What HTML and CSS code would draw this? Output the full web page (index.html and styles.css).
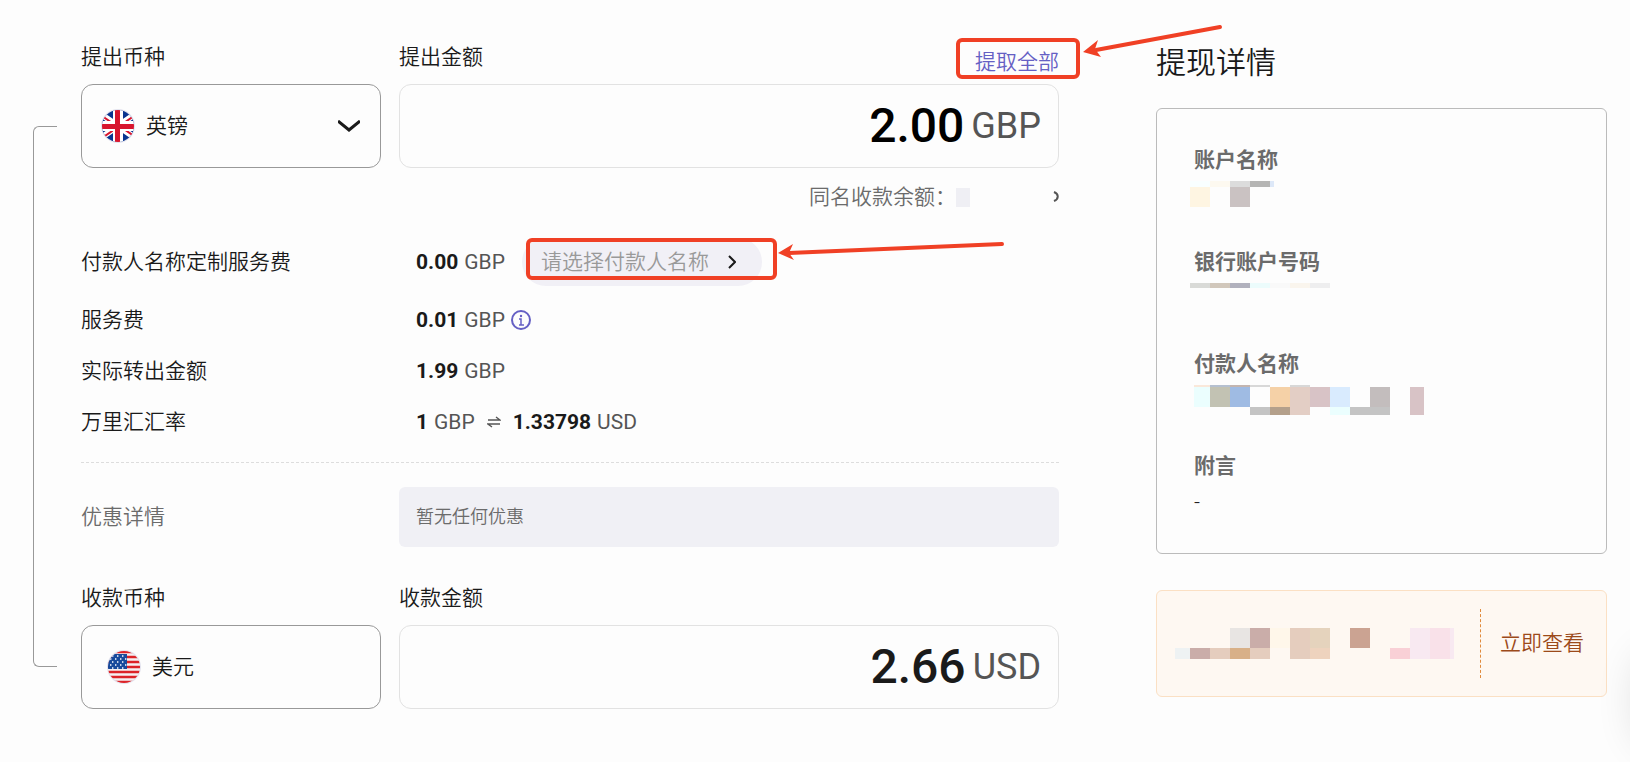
FILE: index.html
```html
<!DOCTYPE html>
<html lang="zh-CN">
<head>
  <meta charset="UTF-8" />
  <meta name="viewport" content="width=device-width, initial-scale=1.0"/>
  <title>提现</title>
  <link rel="stylesheet" href="styles.css">
</head>
<body>
  <main class="page">
    <form class="transfer">
      <div class="bracket"></div>

      <div class="fields">
        <div class="row">
          <div class="col">
            <div class="head"><label for="from-currency">提出币种</label></div>
            <div class="box currency">
              <svg class="flag" viewBox="0 0 34 34">
                <clipPath id="round"><circle cx="17" cy="17" r="16"/></clipPath>
                <circle cx="17" cy="17" r="17" fill="#e3e3ee"/>
                <g clip-path="url(#round)">
                  <path fill="#0a3590" d="M0 0h34v34H0z"/>
                  <path stroke="#fff" stroke-width="6" d="M-3 3l40 28M-3 31L37 3"/>
                  <path stroke="#d8152e" stroke-width="2" d="M-2 5l19 13M36 29L17 16M-2 31l19-13M36 5L17 18"/>
                  <path fill="#fff" d="M12 0h10v34H12zM0 12h34v10H0z"/>
                  <path fill="#d8152e" d="M14 0h5v34h-5zM0 15h34v5H0z"/>
                </g>
              </svg>
              <select id="from-currency">
                <option>英镑</option>
                <option>美元</option>
              </select>
              <svg class="arrow" viewBox="0 0 22 12"><path d="M0 1l11 9 11-9" fill="none" stroke="#1a1a1a" stroke-width="3"/></svg>
            </div>
          </div>
          <div class="col">
            <div class="head">
              <label for="from-amount">提出金额</label>
              <a class="all marked" href="#">提取全部
                <svg class="pointer pointer-all" viewBox="0 0 142 34">
                  <path d="M14 26L138 3" stroke="#f04025" stroke-width="4" stroke-linecap="round"/>
                  <path d="M1 28l15-12-3 9 6 8z" fill="#f04025"/>
                </svg>
              </a>
            </div>
            <div class="box amount">
              <input type="text" id="from-amount" class="strong" value="2.00">
              <span class="unit">GBP</span>
            </div>
          </div>
        </div>

        <div class="balance">
          <span>同名收款余额：</span>
          <span class="masked"></span>
          <svg viewBox="0 0 6 12"><path d="M1 1c5 2 5 7 0 9" fill="none" stroke="#555" stroke-width="2"/></svg>
        </div>

        <div class="line payer">
          <span>付款人名称定制服务费</span>
          <div class="value">
            <b>0.00</b> <i>GBP</i>
            <div class="marked">
              <button type="button" class="pill">请选择付款人名称
                <svg viewBox="0 0 8 14"><path d="M1 1l6 6-6 6" fill="none" stroke="#1a1a1a" stroke-width="2"/></svg>
              </button>
              <svg class="pointer pointer-payer" viewBox="0 0 230 20">
                <path d="M12 13L225 4" stroke="#f04025" stroke-width="4" stroke-linecap="round"/>
                <path d="M1 13l15-9-4 9 5 7z" fill="#f04025"/>
              </svg>
            </div>
          </div>
        </div>
        <div class="line">
          <span>服务费</span>
          <div class="value">
            <b>0.01</b> <i>GBP</i>
            <svg class="info" viewBox="0 0 20 20">
              <circle cx="10" cy="10" r="9" fill="none" stroke="#6560c4" stroke-width="2"/>
              <path d="M8 9h2v6M8 15h5" fill="none" stroke="#6560c4" stroke-width="1.5"/>
              <circle cx="10" cy="6" r="1.2" fill="#6560c4"/>
            </svg>
          </div>
        </div>
        <div class="line">
          <span>实际转出金额</span>
          <div class="value"><b>1.99</b> <i>GBP</i></div>
        </div>
        <div class="line">
          <span>万里汇汇率</span>
          <div class="value">
            <b>1</b> <i>GBP</i>
            <svg class="swap" viewBox="0 0 14 12"><path d="M1 4h12L9 1M13 8H1l4 3" fill="none" stroke="#555" stroke-width="1.4"/></svg>
            <b>1.33798</b> <i>USD</i>
          </div>
        </div>

        <div class="promo">
          <span>优惠详情</span>
          <div class="promo-box">暂无任何优惠</div>
        </div>

        <div class="row">
          <div class="col">
            <div class="head"><label for="to-currency">收款币种</label></div>
            <div class="box currency target">
              <svg class="flag" viewBox="0 0 34 34">
                <circle cx="17" cy="17" r="17" fill="#e3e3ee"/>
                <g clip-path="url(#round)">
                  <path fill="#f5f0f2" d="M0 0h34v34H0z"/>
                  <path stroke="#dc2328" stroke-width="2.6" d="M0 2h34M0 7h34M0 12h34M0 17h34M0 22h34M0 27h34M0 32h34"/>
                  <path fill="#174a9c" d="M0 4h20v15H0z"/>
                  <path stroke="#fff" stroke-width="1.4" stroke-dasharray="1.4 3.6" d="M5 6h15M3 9h17M5 12h15M3 15h17M5 18h15"/>
                </g>
              </svg>
              <select id="to-currency">
                <option>美元</option>
              </select>
            </div>
          </div>
          <div class="col">
            <div class="head"><label for="to-amount">收款金额</label></div>
            <div class="box amount">
              <input type="text" id="to-amount" value="2.66">
              <span class="unit">USD</span>
            </div>
          </div>
        </div>
      </div>
    </form>

    <aside class="detail">
      <h2>提现详情</h2>
      <dl class="card">
        <dt>账户名称</dt>
        <dd>
          <svg class="mosaic" width="84" height="26">
            <path fill="#f9ffff" d="M0 0h20v6H0z"/><path fill="#fdf9f0" d="M20 0h20v6H20z"/>
            <path fill="#dcdcdc" d="M40 0h20v6H40z"/><path fill="#b5b5b4" d="M60 0h20v6H60z"/>
            <path fill="#dde8f8" d="M80 0h4v6h-4z"/><path fill="#fef5e2" d="M0 6h20v20H0z"/>
            <path fill="#cac2c2" d="M40 6h20v20H40z"/>
          </svg>
        </dd>
        <dt>银行账户号码</dt>
        <dd>
          <svg class="mosaic" width="140" height="5">
            <path fill="#d9dad7" d="M0 0h20v5H0z"/><path fill="#d1c7bb" d="M20 0h20v5H20z"/>
            <path fill="#b1b1bd" d="M40 0h20v5H40z"/><path fill="#ecfcfc" d="M60 0h20v5H60z"/>
            <path fill="#f9f9f9" d="M80 0h20v5H80z"/><path fill="#faf5ed" d="M100 0h20v5h-20z"/>
            <path fill="#eeeeef" d="M120 0h20v5h-20z"/>
          </svg>
        </dd>
        <dt>付款人名称</dt>
        <dd>
          <svg class="mosaic" width="234" height="30">
            <path fill="#fae8da" d="M4 0h16v2H4z"/><path fill="#b5c0d0" d="M20 0h20v2H20z"/>
            <path fill="#c3b5b0" d="M40 0h20v2H40z"/><path fill="#d8d8d8" d="M60 0h20v2H60zM100 0h20v2h-20z"/>
            <path fill="#ebfefe" d="M4 2h16v20H4zM140 22h20v8h-20z"/><path fill="#c2c2b3" d="M20 2h20v20H20z"/>
            <path fill="#9fbbe3" d="M40 2h20v20H40z"/><path fill="#f5d1a7" d="M80 2h20v20H80z"/>
            <path fill="#e3cec5" d="M100 2h20v28h-20z"/><path fill="#d8c3c6" d="M120 2h20v20h-20zM220 2h14v28h-14z"/>
            <path fill="#d9ebfe" d="M140 2h20v20h-20z"/><path fill="#c3bdbd" d="M180 2h20v20h-20z"/>
            <path fill="#c4c4c4" d="M60 22h20v8H60zM160 22h40v8h-40z"/><path fill="#b4a08b" d="M80 22h20v8H80z"/>
          </svg>
        </dd>
        <dt>附言</dt>
        <dd>-</dd>
      </dl>

      <div class="notice">
        <svg class="mosaic" width="279" height="31">
          <path fill="#e8e5e3" d="M55 0h20v20H55z"/><path fill="#caada9" d="M75 0h20v20H75zM15 20h20v11H15z"/>
          <path fill="#fff7ea" d="M95 0h20v20H95z"/><path fill="#e5cdbe" d="M115 0h20v31h-20zM35 20h20v11H35zM75 20h20v11H75z"/>
          <path fill="#e5d3bd" d="M135 0h20v20h-20z"/><path fill="#eed3be" d="M135 20h20v11h-20z"/>
          <path fill="#cba392" d="M175 0h20v20h-20z"/><path fill="#eef2f3" d="M0 20h15v11H0z"/>
          <path fill="#d8b088" d="M55 20h20v11H55z"/><path fill="#f9d0d6" d="M215 20h20v11h-20z"/>
          <path fill="#f8e9f1" d="M235 0h44v31h-44z"/><path fill="#f9e1e9" d="M255 0h20v31h-20z"/>
        </svg>
        <a href="#">立即查看</a>
      </div>
    </aside>
  </main>
  <div class="edge-shadow"></div>
</body>
</html>
```

FILE: styles.css
```css
* {
  box-sizing: border-box;
}

body {
  margin: 0;
  background: #fdfdfd;
  color: #1a1a1a;
  font-family: Roboto, "Noto Sans CJK SC", sans-serif;
  font-size: 21px;
  font-weight: 350;
  line-height: 30px;
}

a {
  text-decoration: none;
}

.page {
  display: flex;
  align-items: flex-start;
  gap: 97px;
  padding: 42px 23px 42px 33px;
}

.transfer {
  flex: 1;
  display: flex;
  gap: 24px;
  min-width: 0;
}

/* links the two currency boxes */
.bracket {
  width: 24px;
  margin: 84px 0 42px;
  border: 1px solid #999;
  border-right: none;
  border-radius: 6px 0 0 6px;
}

.fields {
  flex: 1;
  min-width: 0;
}

.row,
.promo,
.line {
  display: grid;
  grid-template-columns: 300px minmax(0, 1fr);
  column-gap: 18px;
}

.head {
  display: flex;
  justify-content: space-between;
  height: 35px;
  margin-bottom: 7px;
}

.box {
  display: flex;
  align-items: center;
  height: 84px;
  border: 1px solid #e2e2e2;
  border-radius: 12px;
}

.currency {
  gap: 11px;
  padding: 0 20px 0 19px;
  border-color: #999;
}

.target {
  padding-left: 25px;
}

.flag {
  width: 34px;
  height: 34px;
}

.arrow {
  width: 22px;
  height: 12px;
  pointer-events: none;
}

select,
input,
button {
  font: inherit;
  color: inherit;
  background: none;
  border: none;
  padding: 0;
  appearance: none;
}

select {
  flex: 1;
}

.amount {
  gap: 7px;
  padding: 0 17px;
}

.amount input {
  flex: 1;
  min-width: 0;
  height: 60px;
  padding-bottom: 2px;
  font-size: 48px;
  font-weight: 500;
  text-align: right;
}

.amount .strong {
  color: #000;
}

.unit {
  color: #555;
  font-size: 36px;
  font-weight: 400;
}

.all {
  align-self: flex-end;
  color: #6560c4;
}

/* red highlight frame */
.marked {
  position: relative;
}

.marked::before {
  content: "";
  position: absolute;
  inset: -9px -21px -2px -19px;
  border: 4px solid #f04025;
  border-radius: 6px;
  pointer-events: none;
}

.pointer {
  position: absolute;
  fill: none;
}

.pointer-all {
  left: 107px;
  top: -23px;
  width: 142px;
  height: 34px;
}

.balance {
  display: flex;
  justify-content: flex-end;
  align-items: center;
  margin-top: 14px;
  color: #6b6b6b;
}

.masked {
  width: 14px;
  height: 19px;
  margin-right: 83px;
  background: #efeff4;
}

.balance svg {
  width: 6px;
  height: 12px;
}

.line {
  align-items: center;
  margin-top: 21px;
}

.payer {
  margin-top: 26px;
}

.payer + .line {
  margin-top: 19px;
}

.value {
  display: flex;
  align-items: center;
  gap: 6px;
  padding-left: 17px;
}

.value b {
  font-weight: 700;
}

.value i {
  color: #555;
  font-style: normal;
  font-weight: 400;
}

.value .marked {
  margin-left: 11px;
}

.value .marked::before {
  inset: 0 -15px 6px 4px;
}

.pill {
  display: flex;
  align-items: center;
  gap: 19px;
  height: 48px;
  padding: 0 26px 0 19px;
  border-radius: 24px;
  background: #f1f0f6;
  color: #999;
}

.pill svg {
  width: 8px;
  height: 14px;
}

.pointer-payer {
  left: 255px;
  top: 2px;
  width: 230px;
  height: 20px;
}

.info {
  width: 20px;
  height: 20px;
}

.swap {
  width: 14px;
  height: 12px;
  margin: 0 6px;
}

.promo {
  align-items: center;
  margin: 25px 0 36px;
  padding-top: 24px;
  border-top: 1px dashed #ddd;
  color: #6b6b6b;
}

.promo-box {
  padding: 15px 17px;
  border-radius: 6px;
  background: #f0f0f5;
  font-size: 18px;
}

.detail {
  flex: none;
  width: 451px;
}

h2 {
  margin: 0 0 24px;
  font-size: 30px;
  font-weight: 350;
  line-height: 42px;
}

.card {
  margin: 0 0 36px;
  padding: 36px 37px 0;
  border: 1px solid #bbb;
  border-radius: 6px;
}

.card dt {
  color: #6b6b6b;
  font-weight: 700;
}

.card dd {
  height: 30px;
  margin: 6px 0 36px;
}

.mosaic {
  display: block;
  shape-rendering: crispEdges;
}

.card .mosaic {
  margin-left: -4px;
}

.notice {
  display: flex;
  justify-content: space-between;
  align-items: center;
  padding: 18px;
  border: 1px solid #fbe0c4;
  border-radius: 6px;
  background: #fef8f2;
}

.notice a {
  padding: 19px 4px 20px 19px;
  border-left: 1px dashed #e08a3c;
  color: #9c4a1a;
  white-space: nowrap;
}

/* shadow of the floating help button, which is docked off screen */
.edge-shadow {
  position: fixed;
  right: -66px;
  bottom: 12px;
  width: 60px;
  height: 100px;
  border-radius: 30px;
  box-shadow: 0 0 40px rgba(0, 0, 0, 0.12);
}
```
